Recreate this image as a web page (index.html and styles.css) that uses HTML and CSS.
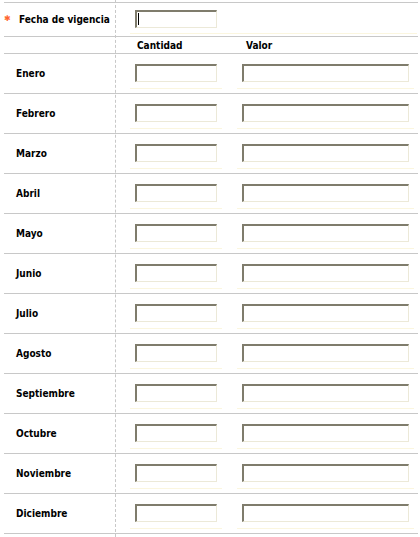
FILE: index.html
```html
<!DOCTYPE html>
<html lang="es">
<head>
<meta charset="utf-8">
<title>Fecha de vigencia</title>
<link rel="stylesheet" href="styles.css">
</head>
<body>
<form class="form">
  <div class="row row-first">
    <div class="label label-req"><span class="req">✱</span>Fecha de vigencia</div>
    <div class="value">
      <div class="cell cell-wide"><input class="field field-small" type="text"><span class="caret"></span></div>
    </div>
  </div>
  <div class="row row-head">
    <div class="label"></div>
    <div class="value head">
      <span class="head-qty">Cantidad</span>
      <span class="head-val">Valor</span>
    </div>
  </div>
  <div class="row month"><div class="label">Enero</div><div class="value pair"><div class="cell"><input class="field field-small" type="text"></div><div class="cell"><input class="field field-large" type="text"></div></div></div>
  <div class="row month"><div class="label">Febrero</div><div class="value pair"><div class="cell"><input class="field field-small" type="text"></div><div class="cell"><input class="field field-large" type="text"></div></div></div>
  <div class="row month"><div class="label">Marzo</div><div class="value pair"><div class="cell"><input class="field field-small" type="text"></div><div class="cell"><input class="field field-large" type="text"></div></div></div>
  <div class="row month"><div class="label">Abril</div><div class="value pair"><div class="cell"><input class="field field-small" type="text"></div><div class="cell"><input class="field field-large" type="text"></div></div></div>
  <div class="row month"><div class="label">Mayo</div><div class="value pair"><div class="cell"><input class="field field-small" type="text"></div><div class="cell"><input class="field field-large" type="text"></div></div></div>
  <div class="row month"><div class="label">Junio</div><div class="value pair"><div class="cell"><input class="field field-small" type="text"></div><div class="cell"><input class="field field-large" type="text"></div></div></div>
  <div class="row month"><div class="label">Julio</div><div class="value pair"><div class="cell"><input class="field field-small" type="text"></div><div class="cell"><input class="field field-large" type="text"></div></div></div>
  <div class="row month"><div class="label">Agosto</div><div class="value pair"><div class="cell"><input class="field field-small" type="text"></div><div class="cell"><input class="field field-large" type="text"></div></div></div>
  <div class="row month"><div class="label">Septiembre</div><div class="value pair"><div class="cell"><input class="field field-small" type="text"></div><div class="cell"><input class="field field-large" type="text"></div></div></div>
  <div class="row month"><div class="label">Octubre</div><div class="value pair"><div class="cell"><input class="field field-small" type="text"></div><div class="cell"><input class="field field-large" type="text"></div></div></div>
  <div class="row month"><div class="label">Noviembre</div><div class="value pair"><div class="cell"><input class="field field-small" type="text"></div><div class="cell"><input class="field field-large" type="text"></div></div></div>
  <div class="row month row-last"><div class="label">Diciembre</div><div class="value pair"><div class="cell"><input class="field field-small" type="text"></div><div class="cell"><input class="field field-large" type="text"></div></div></div>
</form>
</body>
</html>
```

FILE: styles.css
```css
html, body {
  margin: 0;
  padding: 0;
  background: #fff;
}

body {
  font-family: "DejaVu Sans Condensed", "DejaVu Sans", sans-serif;
  font-weight: bold;
  font-size: 10px;
  color: #000;
}

.form {
  position: relative;
  margin: 0 0 0 4px;
  width: 414px;
  padding: 2px 0 3px;
}

.form::before {
  content: "";
  position: absolute;
  left: 111px;
  top: 0;
  bottom: 0;
  border-left: 1px dashed #c8c8c8;
}

.row {
  display: grid;
  grid-template-columns: 111px 1fr;
  border-top: 1px solid #c8c8c8;
}

.row-last {
  border-bottom: 1px solid #c8c8c8;
}

.label {
  display: flex;
  align-items: center;
  padding-left: 12px;
}

.label-req {
  padding-left: 0;
}

.req {
  display: inline-block;
  width: 15px;
  color: #ff6630;
  font-family: "DejaVu Sans", sans-serif;
  font-weight: normal;
  font-size: 8px;
  line-height: 1;
  text-align: left;
  position: relative;
  top: -1px;
}

.value {
  padding-left: 15px;
}

.row-first {
  height: 33px;
}

.row-first .value {
  padding-top: 7px;
}

.cell {
  position: relative;
  padding: 0 5px 5px;
  border-bottom: 1px solid #fbf6df;
}

.cell-wide {
  margin-right: 1px;
}

.caret {
  position: absolute;
  left: 8px;
  top: 3px;
  width: 1px;
  height: 12px;
  background: #000;
}

.row-head {
  height: 16px;
}

.head {
  display: flex;
  align-items: center;
  padding-top: 1px;
}

.head-qty {
  box-sizing: border-box;
  padding-left: 7px;
  width: 116px;
}

.month {
  height: 39px;
}

.pair {
  display: flex;
  gap: 15px;
  padding-top: 10px;
  align-items: flex-start;
}

.pair .cell {
  padding-bottom: 6px;
}

.field {
  display: block;
  box-sizing: border-box;
  height: 18px;
  margin: 0;
  padding: 0 1px;
  background: #fff;
  border: 1px solid #ece9d8;
  border-top: 2px solid #7f7c6c;
  border-left: 2px solid #7f7c6c;
  outline: none;
  font-family: "DejaVu Sans", sans-serif;
  font-size: 11px;
}

.field-small {
  width: 82px;
}

.field-large {
  width: 167px;
}
```
